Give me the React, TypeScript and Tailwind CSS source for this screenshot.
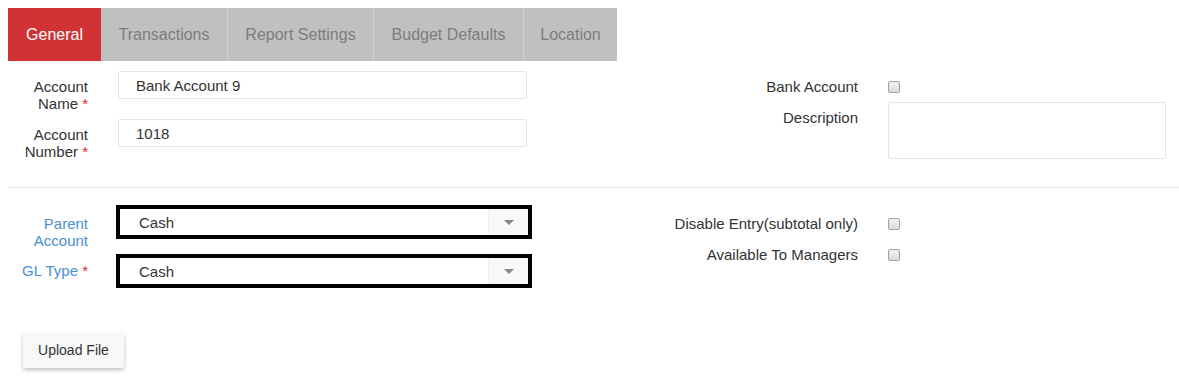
const tabs = [
  { label: 'General', w: 'w-[93px]', active: true },
  { label: 'Transactions', w: 'w-[126px]' },
  { label: 'Report Settings', w: 'w-[146px]' },
  { label: 'Budget Defaults', w: 'w-[150px]' },
  { label: 'Location', w: 'w-[94px]' },
]

function Req() {
  return <span className="text-[#e4282b]"> *</span>
}

function Checkbox() {
  return (
    <div className="w-[12px] h-[12px] rounded-[2px] border border-[#a3a3a3] bg-gradient-to-b from-[#f0f0f0] to-[#dcdcdc]" />
  )
}

function Select({ value }: { value: string }) {
  return (
    <div className="ml-[28px] w-[416px] h-[34px] border-4 border-black bg-white flex">
      <div className="flex-1 pl-[19px] pt-[1px] leading-[26px] text-[#333]">{value}</div>
      <div className="w-[40px] bg-[#f8f8f8] border-l border-[#efefef] flex items-center justify-center">
        <div className="w-0 h-0 border-l-[5px] border-r-[5px] border-t-[5px] border-l-transparent border-r-transparent border-t-[#888]" />
      </div>
    </div>
  )
}

export default function App() {
  return (
    <div className="min-h-screen bg-white pt-2 pl-2 text-[15px] text-[#333] font-['Liberation_Sans',Arial,sans-serif]">
      {/* tabs */}
      <div className="flex h-[53px]">
        {tabs.map((t, i) => (
          <div
            key={t.label}
            className={
              t.active
                ? `${t.w} bg-[#d03236] text-white text-[16px] flex items-center justify-center`
                : `${t.w} bg-[#c0c0c0] text-[#7d7d7d] text-[16px] flex items-center justify-center ${i > 1 ? 'border-l border-[#d2d2d2]' : ''}`
            }
          >
            {t.label}
          </div>
        ))}
      </div>

      {/* account details */}
      <div className="flex mt-[10px]">
        <div className="w-[592px] flex flex-col gap-[7px]">
          <div className="flex items-start">
            <div className="w-[80px] text-right leading-[17px] pt-[7px]">
              Account<br />Name<Req />
            </div>
            <div className="ml-[30px] w-[409px] h-[28px] border border-[#e6e6e6] rounded-[2px] pl-[17px] pt-[1px] leading-[26px]">
              Bank Account 9
            </div>
          </div>
          <div className="flex items-start">
            <div className="w-[80px] text-right leading-[17px] pt-[7px]">
              Account<br />Number<Req />
            </div>
            <div className="ml-[30px] w-[409px] h-[28px] border border-[#e6e6e6] rounded-[2px] pl-[17px] pt-[1px] leading-[26px]">
              1018
            </div>
          </div>
        </div>
        <div className="flex flex-col">
          <div className="flex items-center h-[17px] mt-[7px]">
            <div className="w-[258px] text-right leading-[17px]">Bank Account</div>
            <div className="ml-[30px]">
              <Checkbox />
            </div>
          </div>
          <div className="flex items-start mt-[7px]">
            <div className="w-[258px] text-right leading-[17px] pt-[7px]">Description</div>
            <div className="ml-[30px] w-[278px] h-[57px] border border-[#e6e6e6] rounded-[2px]" />
          </div>
        </div>
      </div>

      <div className="mt-[27px] border-t border-[#e7e7e7]" />

      {/* gl settings */}
      <div className="flex mt-[17px]">
        <div className="w-[592px] flex flex-col gap-[15px]">
          <div className="flex items-start h-[34px]">
            <div className="w-[80px] text-right leading-[17px] pt-[10px] text-[#4a8fcf]">
              Parent<br />Account
            </div>
            <Select value="Cash" />
          </div>
          <div className="flex items-start h-[34px]">
            <div className="w-[80px] text-right leading-[17px] pt-[8px] text-[#4a8fcf]">
              GL Type<Req />
            </div>
            <Select value="Cash" />
          </div>
        </div>
        <div className="flex flex-col pt-[10px] gap-[14px]">
          <div className="flex items-center h-[17px]">
            <div className="w-[258px] text-right leading-[17px]">Disable Entry(subtotal only)</div>
            <div className="ml-[30px]">
              <Checkbox />
            </div>
          </div>
          <div className="flex items-center h-[17px]">
            <div className="w-[258px] text-right leading-[17px]">Available To Managers</div>
            <div className="ml-[30px]">
              <Checkbox />
            </div>
          </div>
        </div>
      </div>

      <button
        type="button"
        className="mt-[45px] ml-[15px] w-[101px] h-[35px] bg-[#f8f8f8] rounded-[2px] text-[14px] text-[#333] shadow-[0_2px_4px_rgba(0,0,0,0.25)]"
      >
        Upload File
      </button>
    </div>
  )
}
